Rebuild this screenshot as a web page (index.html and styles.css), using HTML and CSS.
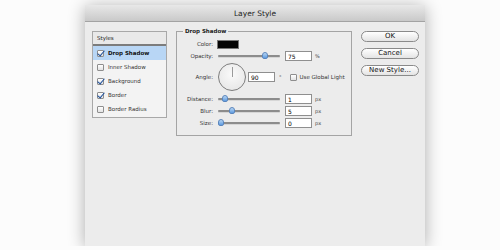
FILE: index.html
```html
<!DOCTYPE html>
<html lang="en">
<head>
    <meta charset="UTF-8">
    <title>Layer Style</title>
    <link rel="stylesheet" href="styles.css">
</head>
<body>
    <div class="dialog">
        <div class="titlebar">Layer Style</div>
        <div class="content">
            <div class="styles">
                <div class="styles-head">Styles</div>
                <div class="style-row active"><span class="check on"></span>Drop Shadow</div>
                <div class="style-row"><span class="check"></span>Inner Shadow</div>
                <div class="style-row"><span class="check on"></span>Background</div>
                <div class="style-row"><span class="check on"></span>Border</div>
                <div class="style-row"><span class="check"></span>Border Radius</div>
            </div>

            <fieldset class="group">
                <legend>Drop Shadow</legend>
                <div class="row">
                    <span class="label">Color:</span>
                    <span class="swatch"></span>
                </div>
                <div class="row">
                    <span class="label">Opacity:</span>
                    <span class="slider"><span class="thumb" style="left: 44px"></span></span>
                    <span class="field">75</span>
                    <span class="unit">%</span>
                </div>
                <div class="row angle-row">
                    <span class="label">Angle:</span>
                    <span class="dial"><span class="hand"></span></span>
                    <span class="field">90</span>
                    <span class="unit deg">°</span>
                    <span class="check"></span>
                    <span class="opt">Use Global Light</span>
                </div>
                <div class="row">
                    <span class="label">Distance:</span>
                    <span class="slider"><span class="thumb" style="left: 4px"></span></span>
                    <span class="field">1</span>
                    <span class="unit">px</span>
                </div>
                <div class="row">
                    <span class="label">Blur:</span>
                    <span class="slider"><span class="thumb" style="left: 11px"></span></span>
                    <span class="field">5</span>
                    <span class="unit">px</span>
                </div>
                <div class="row">
                    <span class="label">Size:</span>
                    <span class="slider"><span class="thumb" style="left: 0px"></span></span>
                    <span class="field">0</span>
                    <span class="unit">px</span>
                </div>
            </fieldset>

            <div class="buttons">
                <button class="btn">OK</button>
                <button class="btn">Cancel</button>
                <button class="btn">New Style...</button>
            </div>
        </div>
    </div>
</body>
</html>
```

FILE: styles.css
```css
*{
    margin: 0;
    padding: 0;
    box-sizing: border-box;
}
body{
    background: #fcfcfc;
    font-family: "DejaVu Sans", "Liberation Sans", sans-serif;
    color: #222;
}
.dialog{
    width: 340px;
    height: 241px;
    margin: 5px 0 0 85px;
    background: #ececec;
    box-shadow: 0 2px 16px rgba(0,0,0,0.32);
}
.titlebar{
    height: 17px;
    line-height: 17px;
    text-align: center;
    font-size: 7.5px;
    color: #1e1e1e;
    background: linear-gradient(#e8e8e8, #c9c9c9);
    border-bottom: 1px solid #a3a3a3;
}
.content{
    display: flex;
    align-items: flex-start;
    padding: 9px 0 0 7px;
}

/* styles list */
.styles{
    width: 75px;
    height: 87px;
    border: 1px solid #a8a8a8;
    background: #f3f3f3;
}
.styles-head{
    height: 14px;
    line-height: 13px;
    padding-left: 4px;
    font-size: 5.5px;
    background: #e9e9e9;
    border-bottom: 2px solid #7c7c7c;
}
.style-row{
    display: flex;
    align-items: center;
    height: 14px;
    padding-left: 4px;
    font-size: 5.5px;
    color: #333;
}
.style-row.active{
    background: #b8d6f5;
    font-weight: bold;
    color: #111;
}
.check{
    position: relative;
    display: inline-block;
    width: 7px;
    height: 7px;
    margin-right: 4px;
    border: 1px solid #8e8e8e;
    border-radius: 1px;
    background: linear-gradient(#ffffff, #e2e2e2);
    flex: none;
}
.check.on::after{
    content: "";
    position: absolute;
    left: 1px;
    top: -2px;
    width: 3px;
    height: 6px;
    border-right: 1.5px solid #1d4f9c;
    border-bottom: 1.5px solid #1d4f9c;
    transform: rotate(40deg);
}

/* drop shadow group */
.group{
    width: 176px;
    height: 109px;
    margin-left: 9px;
    margin-top: -4px;
    border: 1px solid #a4a4a4;
    padding: 4px 0 0 0;
}
.group legend{
    margin-left: 6px;
    padding: 0 2px;
    font-size: 5.5px;
    font-weight: bold;
    line-height: 8px;
}
.row{
    display: flex;
    align-items: center;
    height: 10px;
    margin-bottom: 2px;
    font-size: 5.5px;
}
.label{
    width: 40px;
    padding-right: 4px;
    text-align: right;
    color: #333;
}
.swatch{
    width: 22px;
    height: 9px;
    background: #050505;
    border: 1px solid #777;
}
.slider{
    position: relative;
    width: 62px;
    height: 2px;
    margin-left: 1px;
    background: #8c8c8c;
    border-radius: 1px;
    box-shadow: 0 1px 0 #d6d6d6;
}
.thumb{
    position: absolute;
    top: -3px;
    width: 6px;
    height: 7px;
    border-radius: 3px 3px 2px 2px;
    background: linear-gradient(#b9d7f4, #5e9be0);
    border: 1px solid #5b86bd;
}
.field{
    width: 27px;
    height: 10px;
    margin-left: 5px;
    padding-left: 2px;
    line-height: 9px;
    background: #fff;
    border: 1px solid #8f8f8f;
    font-size: 6px;
    color: #000;
}
.unit{
    margin-left: 3px;
    font-size: 5px;
    color: #444;
}
.angle-row{
    height: 28px;
    margin: 1px 0 3px;
}
.dial{
    position: relative;
    width: 28px;
    height: 28px;
    margin-left: 1px;
    border: 1px solid #7d7d7d;
    border-radius: 50%;
    background: radial-gradient(circle at 50% 40%, #fafafa, #e3e3e3);
    margin-right: -3px;
}
.hand{
    position: absolute;
    left: 13px;
    top: 3px;
    width: 1px;
    height: 10px;
    background: #9a9a9a;
}
.angle-row .check{
    margin-left: 8px;
    margin-right: 3px;
}
.deg{
    margin-left: 4px;
}
.opt{
    color: #333;
}

/* buttons */
.buttons{
    display: flex;
    flex-direction: column;
    gap: 6px;
    margin-left: 9px;
}
.btn{
    width: 58px;
    height: 11px;
    border: 1px solid #8a8a8a;
    border-radius: 6px;
    background: linear-gradient(#ffffff, #e4e4e4);
    font-family: "DejaVu Sans", "Liberation Sans", sans-serif;
    font-size: 7px;
    line-height: 9px;
    color: #111;
}
```
